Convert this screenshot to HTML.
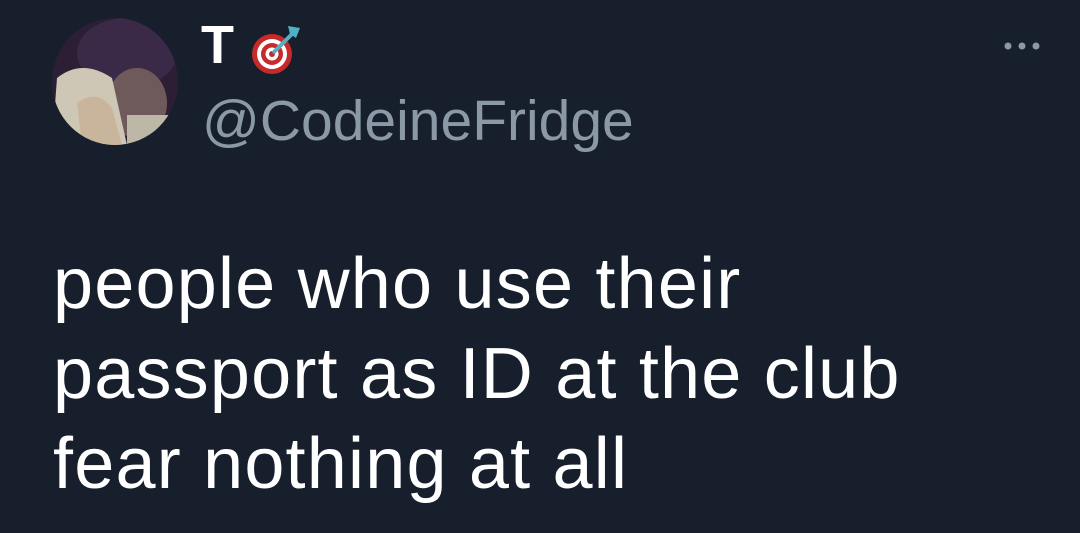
<!DOCTYPE html>
<html><head><style>
html,body{margin:0;padding:0;}
body{width:1080px;height:533px;background:#161f2b;position:relative;overflow:hidden;font-family:"Liberation Sans",sans-serif;}
.av{position:absolute;left:52px;top:18px;width:126px;height:127px;border-radius:50%;overflow:hidden;background:#2a1e33;}
.name{position:absolute;left:201px;top:15px;color:#fff;font-weight:bold;font-size:54px;line-height:60px;}
.handle{position:absolute;left:202px;top:89px;color:#8b98a5;font-size:57px;line-height:64px;}
.body{position:absolute;left:53px;top:239px;color:#fff;font-size:72px;line-height:90px;letter-spacing:1.2px;}
</style></head><body>
<div class="av">
<svg width="126" height="127" viewBox="0 0 126 127">
<rect width="126" height="127" fill="#2c1f35"/>
<ellipse cx="75" cy="35" rx="50" ry="35" fill="#3a2a48"/>
<ellipse cx="85" cy="85" rx="30" ry="35" fill="#6e5a5a"/>
<path d="M5 60 Q30 40 60 60 L75 127 L0 127 Z" fill="#cfc7b5"/>
<path d="M25 85 Q45 70 60 90 L70 127 L30 127 Z" fill="#c9b49c"/>
<rect x="75" y="97" width="50" height="30" fill="#bdb7a8"/>
</svg>
</div>
<div class="name">T</div>
<svg style="position:absolute;left:250px;top:22px" width="52" height="54" viewBox="0 0 52 54">
<circle cx="22" cy="32" r="20" fill="#c62a2a"/><circle cx="22" cy="32" r="15" fill="#fff"/><circle cx="22" cy="32" r="11" fill="#c62a2a"/><circle cx="22" cy="32" r="6.5" fill="#fff"/><circle cx="22" cy="32" r="3" fill="#c62a2a"/>
<path d="M23 31 L42 12" stroke="#4fb0c6" stroke-width="4"/><path d="M38 4 L50 6 L46 16 L40 12 Z" fill="#4fb0c6"/></svg>
<div class="handle">@CodeineFridge</div>
<svg style="position:absolute;left:1002px;top:40px" width="40" height="12"><circle cx="6" cy="6" r="3.5" fill="#8b98a5"/><circle cx="20" cy="6" r="3.5" fill="#8b98a5"/><circle cx="34" cy="6" r="3.5" fill="#8b98a5"/></svg>
<div class="body">people who use their<br>passport as ID at the club<br>fear nothing at all</div>
</body></html>
